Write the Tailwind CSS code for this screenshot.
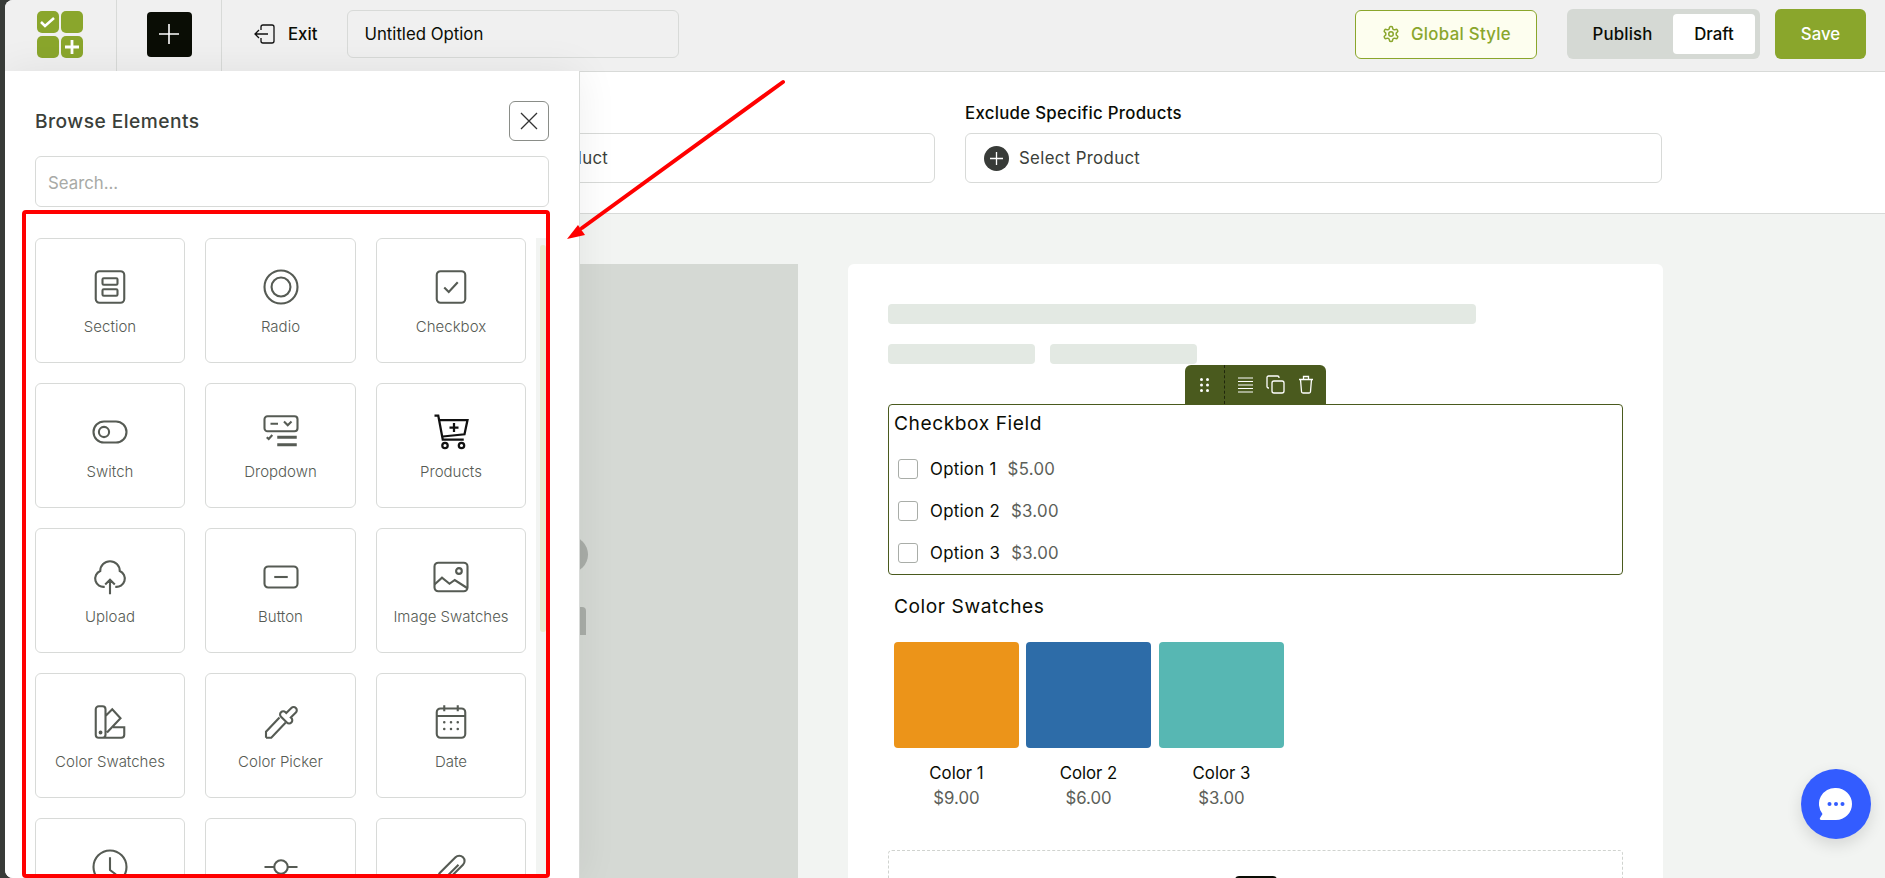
<!DOCTYPE html>
<html lang="en">
<head>
<meta charset="utf-8">
<title>Untitled Option</title>
<script src="https://cdn.jsdelivr.net/npm/@tailwindcss/browser@4"></script>
</head>
<body class="bg-[#383b38] font-[Inter,sans-serif] overflow-hidden">
<div class="relative ml-[5px] h-[878px] flex flex-col overflow-hidden rounded-l-lg bg-white">

    <!-- top bar -->
    <header class="flex h-[72px] flex-none items-center border-b border-[#d8dad8] bg-[#f0f0f0] text-[#0a0d05]">
        <div class="flex h-full w-[112px] flex-none items-center border-r border-[#d8dad8] pb-[3px] pl-[32px]">
            <svg class="h-[47px] w-[46px]" viewBox="0 0 46 47">
                <rect x="0" y="0" width="22" height="22" rx="5" fill="#8aa62c"/>
                <rect x="24" y="0" width="22" height="22" rx="5" fill="#8aa62c"/>
                <rect x="0" y="25" width="22" height="22" rx="5" fill="#8aa62c"/>
                <rect x="24" y="25" width="22" height="22" rx="5" fill="#8aa62c"/>
                <path d="M4 11l4 4 9-8" fill="none" stroke="#fff" stroke-width="2.5"/>
                <path d="M35 29v14M28 36h14" fill="none" stroke="#fff" stroke-width="2.8"/>
            </svg>
        </div>
        <div class="flex h-full w-[105px] flex-none items-center justify-center border-r border-[#d8dad8] pb-[3px]">
            <div class="flex h-[45px] w-[45px] items-center justify-center rounded bg-[#0a0d05]">
                <svg class="h-[20px] w-[20px]" viewBox="0 0 20 20"><path d="M10 0v20M0 10h20" stroke="#fff" stroke-width="1.6"/></svg>
            </div>
        </div>
        <div class="mb-[3px] ml-[32px] flex items-center">
            <svg class="h-[20px] w-[21px]" viewBox="0 0 21 20" fill="none" stroke="#111" stroke-width="1.3">
                <path d="M7 6V3a2 2 0 0 1 2-2h9a2 2 0 0 1 2 2v14a2 2 0 0 1-2 2H9a2 2 0 0 1-2-2v-3M14 10H1M5 6l-4 4 4 4"/>
            </svg>
            <span class="ml-[13px] pt-[2px] text-[16.8px] font-medium">Exit</span>
        </div>
        <div class="mb-[3px] ml-[30px] flex h-[48px] w-[332px] items-center rounded-md border border-[#d8dad8] bg-[#f0f0f0] pl-[16px] pt-[2px] text-[16.8px]">Untitled Option</div>
        <div class="mb-[3px] ml-auto mr-[19px] flex items-center">
            <div class="flex h-[49px] w-[182px] items-center justify-center gap-[11px] rounded-md border border-[#8aa62c] bg-[#fdfeef] pl-[1px] text-[16.8px] font-medium tracking-[0.3px] text-[#8aa62c]">
                <svg class="h-[18px] w-[18px]" viewBox="0 0 24 24" fill="none" stroke="#8aa62c" stroke-width="2">
                    <path d="M12.22 2h-.44a2 2 0 0 0-2 2v.18a2 2 0 0 1-1 1.73l-.43.25a2 2 0 0 1-2 0l-.15-.08a2 2 0 0 0-2.73.73l-.22.38a2 2 0 0 0 .73 2.73l.15.1a2 2 0 0 1 1 1.72v.51a2 2 0 0 1-1 1.74l-.15.09a2 2 0 0 0-.73 2.73l.22.38a2 2 0 0 0 2.73.73l.15-.08a2 2 0 0 1 2 0l.43.25a2 2 0 0 1 1 1.73V20a2 2 0 0 0 2 2h.44a2 2 0 0 0 2-2v-.18a2 2 0 0 1 1-1.73l.43-.25a2 2 0 0 1 2 0l.15.08a2 2 0 0 0 2.73-.73l.22-.39a2 2 0 0 0-.73-2.73l-.15-.08a2 2 0 0 1-1-1.74v-.5a2 2 0 0 1 1-1.74l.15-.09a2 2 0 0 0 .73-2.73l-.22-.38a2 2 0 0 0-2.73-.73l-.15.08a2 2 0 0 1-2 0l-.43-.25a2 2 0 0 1-1-1.73V4a2 2 0 0 0-2-2z"/>
                    <circle cx="12" cy="12" r="3"/>
                </svg>
                <span class="pt-[2px]">Global Style</span>
            </div>
            <div class="ml-[30px] flex h-[50px] w-[193px] items-center rounded-md bg-[#d5d9d4] pr-[5px] text-[16.8px] font-medium">
                <span class="flex-1 pl-[5px] pt-[2px] text-center tracking-[0.15px]">Publish</span>
                <span class="flex h-[40px] w-[82px] items-center justify-center rounded-sm bg-white pt-[2px]">Draft</span>
            </div>
            <div class="ml-[15px] flex h-[50px] w-[91px] items-center justify-center rounded-md bg-[#8aa62c] pt-[2px] text-[16.8px] font-medium text-white">Save</div>
        </div>
    </header>

    <!-- product selects -->
    <section class="flex h-[142px] flex-none justify-end gap-[30px] border-b border-[#d8dad8] bg-white pr-[223px] pt-[29px] text-[#0a0d05]">
        <div class="w-[502px]">
            <div class="h-[24px] text-[16.8px] font-medium leading-[24px] tracking-[0.3px]">Include Products</div>
            <div class="mt-[8px] flex h-[50px] items-center rounded-md border border-[#d8dad8] pl-[18px] text-[16.8px] tracking-[0.35px] text-[#3b3f3a]">
                <svg class="h-[25px] w-[25px]" viewBox="0 0 25 25"><circle cx="12.5" cy="12.5" r="12.5" fill="#383b38"/><path d="M12.5 6v13M6 12.5h13" stroke="#fff" stroke-width="1.3"/></svg>
                <span class="ml-[10px] pt-[1px]">Select Product</span>
            </div>
        </div>
        <div class="w-[697px]">
            <div class="h-[24px] text-[16.8px] font-medium leading-[24px] tracking-[0.3px]">Exclude Specific Products</div>
            <div class="mt-[8px] flex h-[50px] items-center rounded-md border border-[#d8dad8] pl-[18px] text-[16.8px] tracking-[0.35px] text-[#3b3f3a]">
                <svg class="h-[25px] w-[25px]" viewBox="0 0 25 25"><circle cx="12.5" cy="12.5" r="12.5" fill="#383b38"/><path d="M12.5 6v13M6 12.5h13" stroke="#fff" stroke-width="1.3"/></svg>
                <span class="ml-[10px] pt-[1px]">Select Product</span>
            </div>
        </div>
    </section>

    <!-- preview -->
    <main class="flex min-h-0 flex-1 justify-end gap-[50px] overflow-hidden bg-[#f2f4f2] pr-[222px] pt-[50px]">
        <div class="relative h-[700px] w-[500px] bg-[#d5d9d4]">
            <div class="absolute left-[253px] top-[272px] h-[37px] w-[37px] rounded-full bg-[#a9ada8]"></div>
            <div class="absolute left-[253px] top-[343px] h-[28px] w-[35px] rounded-t bg-[#a9ada8]"></div>
        </div>
        <div class="h-[700px] w-[815px] rounded-md bg-white px-[40px] pt-[40px]">
            <div class="h-[20px] w-[588px] rounded bg-[#e3e9e3]"></div>
            <div class="mt-[20px] flex gap-[15px]">
                <div class="h-[20px] w-[147px] rounded bg-[#e3e9e3]"></div>
                <div class="h-[20px] w-[147px] rounded bg-[#e3e9e3]"></div>
            </div>

            <!-- selected field -->
            <div class="relative mt-[40px] h-[171px] rounded-sm border border-[#4a5a1e] pl-[5px] pt-[6px] text-[#0a0d05]">
                <div class="absolute -top-[40px] left-[296px] flex h-[39px] w-[141px] items-center rounded-t-md bg-[#4a5a1e]">
                    <div class="flex h-full w-[40px] items-center justify-center border-r border-dashed border-[#20260c]">
                        <svg class="h-[14px] w-[9px]" viewBox="0 0 9 14" fill="#fff"><circle cx="1.5" cy="1.5" r="1.5"/><circle cx="7.5" cy="1.5" r="1.5"/><circle cx="1.5" cy="7" r="1.5"/><circle cx="7.5" cy="7" r="1.5"/><circle cx="1.5" cy="12.5" r="1.5"/><circle cx="7.5" cy="12.5" r="1.5"/></svg>
                    </div>
                    <svg class="ml-[13px] h-[16px] w-[15px]" viewBox="0 0 15 16" stroke="#fff" stroke-width="1"><path d="M0 1h15M0 4.5h15M0 8h15M0 11.500h15M0 15h15"/></svg>
                    <svg class="ml-[13px] h-[19px] w-[19px]" viewBox="0 0 19 19" fill="none" stroke="#fff" stroke-width="1.300"><rect x="6" y="6" width="12" height="12" rx="2"/><path d="M3 13H2.500A1.500 1.500 0 0 1 1 11.500V2.500A1.500 1.500 0 0 1 2.500 1h9A1.500 1.500 0 0 1 13 2.500V3"/></svg>
                    <svg class="ml-[13px] h-[19px] w-[16px]" viewBox="0 0 16 19" fill="none" stroke="#fff" stroke-width="1.300"><path d="M1 4.500h14M5.500 4.500V1.500h5v3M2.500 4.500l1 12a1.500 1.500 0 0 0 1.500 1.500h6a1.500 1.500 0 0 0 1.500-1.500l1-12"/></svg>
                </div>
                <div class="h-[24px] text-[19.2px] leading-[24px] tracking-[0.55px]">Checkbox Field</div>
                <div class="mt-[13px] flex h-[42px] items-center pl-[4px] text-[16.8px] tracking-[0.3px]">
                    <span class="h-[20px] w-[20px] rounded-[3px] border border-[#a9ada8] bg-white"></span>
                    <span class="ml-[12px] pt-[1px]">Option 1</span><span class="ml-[11px] pt-[1px] text-[#5c6059]">$5.00</span>
                </div>
                <div class="flex h-[42px] items-center pl-[4px] text-[16.8px] tracking-[0.3px]">
                    <span class="h-[20px] w-[20px] rounded-[3px] border border-[#a9ada8] bg-white"></span>
                    <span class="ml-[12px] pt-[1px]">Option 2</span><span class="ml-[11px] pt-[1px] text-[#5c6059]">$3.00</span>
                </div>
                <div class="flex h-[42px] items-center pl-[4px] text-[16.8px] tracking-[0.3px]">
                    <span class="h-[20px] w-[20px] rounded-[3px] border border-[#a9ada8] bg-white"></span>
                    <span class="ml-[12px] pt-[1px]">Option 3</span><span class="ml-[11px] pt-[1px] text-[#5c6059]">$3.00</span>
                </div>
            </div>

            <!-- swatches -->
            <div class="pl-[6px] text-[#0a0d05]">
                <div class="mt-[19px] h-[24px] text-[19.2px] leading-[24px] tracking-[0.55px]">Color Swatches</div>
                <div class="mt-[24px] flex gap-[7px] text-center text-[16.8px] leading-[24px]">
                    <div class="w-[125px]">
                        <div class="h-[106px] rounded bg-[#ec9419]"></div>
                        <div class="mt-[13px]">Color 1</div>
                        <div class="pt-[1px] text-[#5c6059]">$9.00</div>
                    </div>
                    <div class="w-[125px]">
                        <div class="h-[106px] rounded bg-[#2d6ca8]"></div>
                        <div class="mt-[13px]">Color 2</div>
                        <div class="pt-[1px] text-[#5c6059]">$6.00</div>
                    </div>
                    <div class="ml-px w-[125px]">
                        <div class="h-[106px] rounded bg-[#57b7b3]"></div>
                        <div class="mt-[13px]">Color 3</div>
                        <div class="pt-[1px] text-[#5c6059]">$3.00</div>
                    </div>
                </div>
            </div>
            <div class="mt-[40px] flex h-[100px] justify-center rounded border border-dashed border-[#d0d3cf] pt-[25px]">
                <div class="h-[40px] w-[42px] rounded bg-[#0a0d05]"></div>
            </div>
        </div>
    </main>

    <!-- browse elements panel, opens over the page -->
    <aside class="absolute bottom-0 left-0 top-[71px] w-[575px] overflow-hidden rounded-bl-lg border-r border-[#d8dad8] bg-white px-[30px] pt-[30px] shadow-[0_0_40px_rgba(0,0,0,0.07)]">
        <div class="flex h-[40px] w-[514px] items-center justify-between">
            <h2 class="text-[19.2px] font-medium tracking-[0.45px] text-[#3b3f3a]">Browse Elements</h2>
            <div class="flex h-[40px] w-[40px] items-center justify-center rounded-md border border-[#8a8d88]">
                <svg class="h-[18px] w-[18px]" viewBox="0 0 18 18"><path d="M1 1l16 16M17 1L1 17" stroke="#333" stroke-width="1.300"/></svg>
            </div>
        </div>
        <div class="mt-[15px] flex h-[51px] w-[514px] items-center rounded-md border border-[#d8dad8] pl-[12px] pt-[5px] text-[16.8px] text-[#a8aaa6]">Search...</div>

        <div class="absolute bottom-0 left-[531px] top-[167px] w-[14px] bg-[#f2f4f2]">
            <div class="ml-[4px] mt-[7px] h-[387px] w-[6px] rounded-full bg-[#e8edcf]"></div>
        </div>

        <div class="mt-[31px] grid grid-cols-[150px_151px_150px] gap-x-[20px] gap-y-[20px] text-center text-[15px] font-light leading-[20px] text-[#565b54]">
            <div class="flex h-[125px] flex-col items-center rounded-md border border-[#d8dad8] pt-[30px]">
                <svg class="h-[36px] w-[36px]" viewBox="0 0 24 24" fill="none" stroke="#565b54" stroke-width="1.400"><rect x="2.500" y="1.500" width="19" height="21" rx="2.500"/><rect x="7" y="6.200" width="10" height="4.300" rx="0.800"/><rect x="7" y="13.500" width="10" height="4.300" rx="0.800"/></svg>
                <span class="mt-[12px]">Section</span>
            </div>
            <div class="flex h-[125px] flex-col items-center rounded-md border border-[#d8dad8] pt-[30px]">
                <svg class="h-[36px] w-[36px]" viewBox="0 0 24 24" fill="none" stroke="#565b54" stroke-width="1.400"><circle cx="12" cy="12" r="11"/><circle cx="12" cy="12" r="6.300"/></svg>
                <span class="mt-[12px]">Radio</span>
            </div>
            <div class="flex h-[125px] flex-col items-center rounded-md border border-[#d8dad8] pt-[30px]">
                <svg class="h-[36px] w-[36px]" viewBox="0 0 24 24" fill="none" stroke="#565b54" stroke-width="1.400"><rect x="2.500" y="1.500" width="19" height="21" rx="2.500"/><path d="M7.500 12.300l3 3 6-6.500"/></svg>
                <span class="mt-[12px]">Checkbox</span>
            </div>

            <div class="flex h-[125px] flex-col items-center rounded-md border border-[#d8dad8] pt-[30px]">
                <svg class="h-[36px] w-[36px]" viewBox="0 0 24 24" fill="none" stroke="#565b54" stroke-width="1.400"><rect x="1" y="5" width="22" height="14" rx="7"/><circle cx="8" cy="12" r="3.400"/></svg>
                <span class="mt-[12px]">Switch</span>
            </div>
            <div class="flex h-[125px] flex-col items-center rounded-md border border-[#d8dad8] pt-[30px]">
                <svg class="h-[36px] w-[36px]" viewBox="0 0 24 24" fill="none" stroke="#565b54" stroke-width="1.400"><rect x="1" y="1.500" width="22" height="10" rx="2"/><path d="M5 6.500h5M14 5l2.500 2.500L19 5M2.500 15.500l1.300 1.200 2.400-2.700"/><path d="M9.500 15.500h13M9.500 20.500h13" stroke-width="1.900"/></svg>
                <span class="mt-[12px]">Dropdown</span>
            </div>
            <div class="flex h-[125px] flex-col items-center rounded-md border border-[#d8dad8] pt-[30px]">
                <svg class="h-[36px] w-[36px]" viewBox="0 0 24 24" fill="none" stroke="#111" stroke-width="1.500"><path d="M1 1h2.500l3 16h14M4.500 4h18.500l-2 9.500-14.500 1.500"/><circle cx="8" cy="21" r="1.800"/><circle cx="19" cy="21" r="1.800"/><path d="M14 6v6M11 9h6"/></svg>
                <span class="mt-[12px]">Products</span>
            </div>

            <div class="flex h-[125px] flex-col items-center rounded-md border border-[#d8dad8] pt-[30px]">
                <svg class="h-[36px] w-[36px]" viewBox="0 0 24 24" fill="none" stroke="#565b54" stroke-width="1.400"><path d="M8.500 18.500A5.500 5.500 0 0 1 5.500 8 6.500 6.500 0 0 1 18.500 8 5.500 5.500 0 0 1 15.500 18.500M12 23.500V14M8.800 17L12 13.800l3.200 3.200"/></svg>
                <span class="mt-[12px]">Upload</span>
            </div>
            <div class="flex h-[125px] flex-col items-center rounded-md border border-[#d8dad8] pt-[30px]">
                <svg class="h-[36px] w-[36px]" viewBox="0 0 24 24" fill="none" stroke="#565b54" stroke-width="1.400"><rect x="1" y="5" width="22" height="14" rx="2.500"/><path d="M7.500 12h9"/></svg>
                <span class="mt-[12px]">Button</span>
            </div>
            <div class="flex h-[125px] flex-col items-center rounded-md border border-[#d8dad8] pt-[30px]">
                <svg class="h-[36px] w-[36px]" viewBox="0 0 24 24" fill="none" stroke="#565b54" stroke-width="1.400"><rect x="1" y="2.500" width="22" height="19" rx="2.500"/><circle cx="17.300" cy="8" r="1.900"/><path d="M1 17l5-4.500 5 4 3.500-2.500 8.500 5.500"/></svg>
                <span class="mt-[12px]">Image Swatches</span>
            </div>

            <div class="flex h-[125px] flex-col items-center rounded-md border border-[#d8dad8] pt-[30px]">
                <svg class="h-[36px] w-[36px]" viewBox="0 0 24 24" fill="none" stroke="#565b54" stroke-width="1.400"><path d="M2.500 3.500a2 2 0 0 1 2-2h2.500a2 2 0 0 1 2 2v17a2 2 0 0 1-2 2h-2.500a2 2 0 0 1-2-2zM9 8l4.500-4.500 5.500 6L10 19M14 15.500h7.500v5a2 2 0 0 1-2 2H6"/><circle cx="5.700" cy="19" r="0.600" fill="#565b54"/></svg>
                <span class="mt-[12px]">Color Swatches</span>
            </div>
            <div class="flex h-[125px] flex-col items-center rounded-md border border-[#d8dad8] pt-[30px]">
                <svg class="h-[36px] w-[36px]" viewBox="0 0 24 24" fill="none" stroke="#565b54" stroke-width="1.400"><path d="M2 22.500h3.500l9.500-10M2 22.500V18.500l9-9.500M15.500 6l3.400-3.400a2.100 2.100 0 1 1 3 3L18.500 9l.4.4a2.100 2.100 0 1 1-3 3L12 8.500a2.100 2.100 0 1 1 3-3z"/></svg>
                <span class="mt-[12px]">Color Picker</span>
            </div>
            <div class="flex h-[125px] flex-col items-center rounded-md border border-[#d8dad8] pt-[30px]">
                <svg class="h-[36px] w-[36px]" viewBox="0 0 24 24" fill="none" stroke="#565b54" stroke-width="1.400"><rect x="2.500" y="3" width="19" height="19.500" rx="2.500"/><path d="M2.500 8h19M7.500 0.800v4M16.500 0.800v4"/><path d="M7.500 12.200h.01M12 12.200h.01M16.500 12.200h.01M7.500 16.700h.01M12 16.700h.01M16.500 16.700h.01" stroke-width="1.700" stroke-linecap="round"/></svg>
                <span class="mt-[12px]">Date</span>
            </div>

            <!-- last row runs off the bottom of the window, only the icons show -->
            <div class="flex h-[125px] flex-col items-center rounded-md border border-[#d8dad8] pt-[30px]">
                <svg class="h-[36px] w-[36px]" viewBox="0 0 24 24" fill="none" stroke="#565b54" stroke-width="1.400"><circle cx="12" cy="12" r="11"/><path d="M12 5.500V14l4 3"/></svg>
            </div>
            <div class="flex h-[125px] flex-col items-center rounded-md border border-[#d8dad8] pt-[30px]">
                <svg class="h-[36px] w-[36px]" viewBox="0 0 24 24" fill="none" stroke="#565b54" stroke-width="1.400"><circle cx="12" cy="12" r="4.500"/><path d="M1 12h6.500M16.500 12H23"/></svg>
            </div>
            <div class="flex h-[125px] flex-col items-center rounded-md border border-[#d8dad8] pt-[30px]">
                <svg class="h-[36px] w-[36px]" viewBox="0 0 24 24" fill="none" stroke="#565b54" stroke-width="1.400"><path d="M9 21.500l11-11a3.500 3.500 0 0 0-5-5L4.500 16a2.500 2.500 0 0 0 3.500 3.500l9-9"/></svg>
            </div>
        </div>
    </aside>

    <!-- red annotation over the screenshot -->
    <div class="pointer-events-none absolute bottom-0 left-[17px] top-[210px] w-[528px] rounded-sm border-[4px] border-[#ff0000]"></div>
    <svg class="pointer-events-none absolute left-0 top-0 h-[878px] w-[1880px]" viewBox="0 0 1880 878">
        <path d="M778 82L577 228" stroke="#ff0000" stroke-width="4" stroke-linecap="round"/>
        <path d="M562 239L573 225 580 235z" fill="#ff0000"/>
    </svg>

    <!-- chat bubble -->
    <div class="absolute bottom-[39px] right-[14px] flex h-[70px] w-[70px] items-center justify-center rounded-full bg-[#335cff] shadow-[0_6px_16px_rgba(0,0,0,0.12)]">
        <svg class="h-[34px] w-[34px]" viewBox="0 0 34 34"><path d="M17 1a16 16 0 1 1 0 32H2c-1 0-1.500-1-1-2l2.500-4A16 16 0 0 1 17 1z" fill="#fff"/><circle cx="10.500" cy="17" r="2" fill="#335cff"/><circle cx="17" cy="17" r="2" fill="#335cff"/><circle cx="23.500" cy="17" r="2" fill="#335cff"/></svg>
    </div>
</div>
</body>
</html>
